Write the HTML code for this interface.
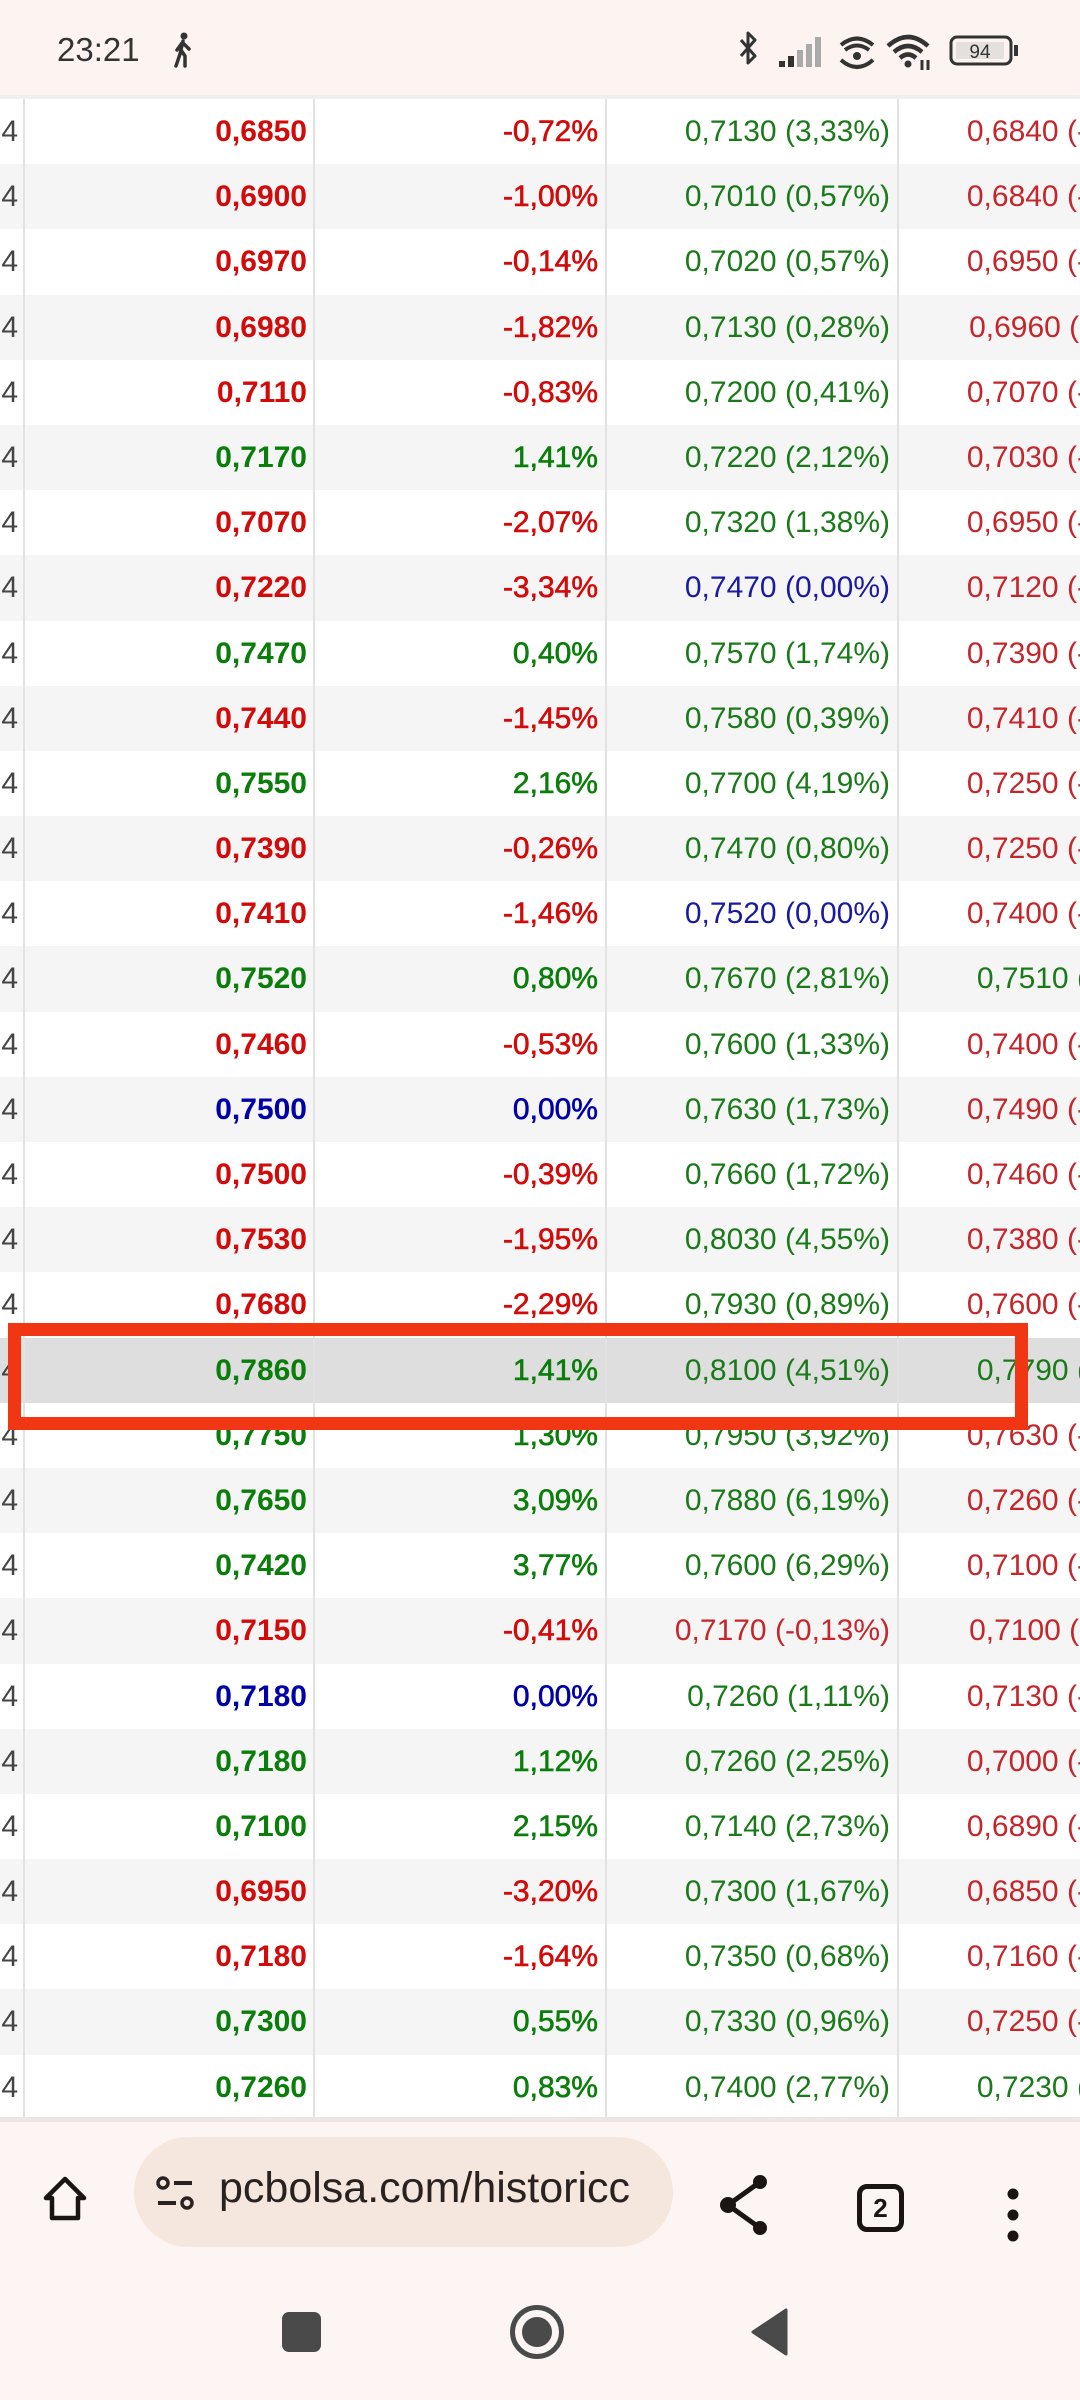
<!DOCTYPE html>
<html><head><meta charset="utf-8">
<style>
*{margin:0;padding:0;box-sizing:border-box}
html,body{width:1080px;height:2400px;overflow:hidden;background:#fdf5f3;font-family:"Liberation Sans",sans-serif}
#sb{position:absolute;left:0;top:0;width:1080px;height:95px;background:#fdf4f2}
#time{position:absolute;left:57px;top:31px;font-size:33px;color:#333}
#tbl{position:absolute;left:0;top:95px;width:1080px;height:2027px;background:#fff;overflow:hidden;border-top:4px solid #f0f0f0}
.r{position:relative;height:65.2px;width:1080px}
.r:nth-child(even){background:#f5f5f5}
.r span{position:absolute;top:0;line-height:65px;font-size:30px;white-space:nowrap;text-align:right}
.a{left:-20px;width:38px;color:#444}
.b{left:23px;width:284px;font-weight:bold}
.c{left:314px;width:284px;-webkit-text-stroke:0.6px currentColor}
.d{left:606px;width:284px}
.e{left:898px;width:284px}
.v{position:absolute;top:0;width:2px;height:2027px;background:#e2e2e2}
.R{color:#d20a0a}.G{color:#0a7d0a}.B{color:#0000a8}
.d.G,.e.G{color:#1a7a1a}.d.R,.e.R{color:#c4262b}.d.B{color:#1a1aa0}
.hl{background:#dedede!important}
#box{position:absolute;left:8px;top:1323px;width:1020px;height:107px;border:13px solid #f03612}
#bb{position:absolute;left:0;top:2122px;width:1080px;height:278px;background:#fdf5f3}
#url{position:absolute;left:134px;top:15px;width:539px;height:110px;border-radius:55px;background:#f5e6de;overflow:hidden}
#url span{position:absolute;left:85px;top:27px;font-size:43px;color:#2a2220;white-space:nowrap}
</style></head><body>
<div id="sb">
<div id="time">23:21</div>
<svg style="position:absolute;left:172px;top:32px" width="22" height="36" viewBox="0 0 22 36"><circle cx="12" cy="4" r="3.5" fill="#333"/><path d="M11 9 L8 22 L4 34 M9 18 L13 24 L13 34 M11 11 L17 17 M10 11 L5 18" stroke="#333" stroke-width="3.5" fill="none" stroke-linecap="round"/></svg>
<svg style="position:absolute;left:735px;top:30px" width="290" height="42" viewBox="0 0 290 42">
<path d="M6 10 L20 26 L13 33 L13 3 L20 10 L6 26" stroke="#333" stroke-width="3" fill="none" stroke-linejoin="round"/>
<rect x="44" y="31" width="6" height="6" fill="#333"/><rect x="53" y="26" width="6" height="11" fill="#333"/><rect x="62" y="20" width="6" height="17" fill="#aaa"/><rect x="71" y="14" width="6" height="23" fill="#aaa"/><rect x="80" y="7" width="6" height="30" fill="#aaa"/>
<path d="M106 15 Q122 2 138 15 M110 20 Q122 11 134 20" stroke="#333" stroke-width="4" fill="none"/><circle cx="122" cy="26" r="4" fill="#333"/><path d="M106 30 Q122 44 138 30" stroke="#333" stroke-width="4" fill="none"/>
<path d="M153 16 Q173 -2 193 16 M159 22 Q173 10 187 22 M165 28 Q173 21 181 28" stroke="#333" stroke-width="4.5" fill="none"/><circle cx="173" cy="34" r="3.5" fill="#333"/><path d="M187 30 v10 M193 30 v10" stroke="#333" stroke-width="3"/>
<rect x="216" y="7" width="60" height="27" rx="6" fill="none" stroke="#333" stroke-width="3"/><rect x="221" y="12" width="48" height="17" fill="#e4e0de"/><rect x="279" y="15" width="4" height="11" fill="#333"/>
<text x="245" y="28" font-size="19" text-anchor="middle" fill="#333" font-family="Liberation Sans">94</text>
</svg>
</div>
<div id="tbl">
<div class="r"><span class="a">4</span><span class="b R">0,6850</span><span class="c R">-0,72%</span><span class="d G">0,7130 (3,33%)</span><span class="e R">0,6840 (-0,15%)</span></div>
<div class="r"><span class="a">4</span><span class="b R">0,6900</span><span class="c R">-1,00%</span><span class="d G">0,7010 (0,57%)</span><span class="e R">0,6840 (-0,15%)</span></div>
<div class="r"><span class="a">4</span><span class="b R">0,6970</span><span class="c R">-0,14%</span><span class="d G">0,7020 (0,57%)</span><span class="e R">0,6950 (-0,43%)</span></div>
<div class="r"><span class="a">4</span><span class="b R">0,6980</span><span class="c R">-1,82%</span><span class="d G">0,7130 (0,28%)</span><span class="e R">0,6960 (-2,11%)</span></div>
<div class="r"><span class="a">4</span><span class="b R">0,7110</span><span class="c R">-0,83%</span><span class="d G">0,7200 (0,41%)</span><span class="e R">0,7070 (-1,39%)</span></div>
<div class="r"><span class="a">4</span><span class="b G">0,7170</span><span class="c G">1,41%</span><span class="d G">0,7220 (2,12%)</span><span class="e R">0,7030 (-0,57%)</span></div>
<div class="r"><span class="a">4</span><span class="b R">0,7070</span><span class="c R">-2,07%</span><span class="d G">0,7320 (1,38%)</span><span class="e R">0,6950 (-3,74%)</span></div>
<div class="r"><span class="a">4</span><span class="b R">0,7220</span><span class="c R">-3,34%</span><span class="d B">0,7470 (0,00%)</span><span class="e R">0,7120 (-4,69%)</span></div>
<div class="r"><span class="a">4</span><span class="b G">0,7470</span><span class="c G">0,40%</span><span class="d G">0,7570 (1,74%)</span><span class="e R">0,7390 (-0,67%)</span></div>
<div class="r"><span class="a">4</span><span class="b R">0,7440</span><span class="c R">-1,45%</span><span class="d G">0,7580 (0,39%)</span><span class="e R">0,7410 (-1,85%)</span></div>
<div class="r"><span class="a">4</span><span class="b G">0,7550</span><span class="c G">2,16%</span><span class="d G">0,7700 (4,19%)</span><span class="e R">0,7250 (-1,89%)</span></div>
<div class="r"><span class="a">4</span><span class="b R">0,7390</span><span class="c R">-0,26%</span><span class="d G">0,7470 (0,80%)</span><span class="e R">0,7250 (-2,16%)</span></div>
<div class="r"><span class="a">4</span><span class="b R">0,7410</span><span class="c R">-1,46%</span><span class="d B">0,7520 (0,00%)</span><span class="e R">0,7400 (-1,60%)</span></div>
<div class="r"><span class="a">4</span><span class="b G">0,7520</span><span class="c G">0,80%</span><span class="d G">0,7670 (2,81%)</span><span class="e G">0,7510 (0,67%)</span></div>
<div class="r"><span class="a">4</span><span class="b R">0,7460</span><span class="c R">-0,53%</span><span class="d G">0,7600 (1,33%)</span><span class="e R">0,7400 (-1,33%)</span></div>
<div class="r"><span class="a">4</span><span class="b B">0,7500</span><span class="c B">0,00%</span><span class="d G">0,7630 (1,73%)</span><span class="e R">0,7490 (-0,13%)</span></div>
<div class="r"><span class="a">4</span><span class="b R">0,7500</span><span class="c R">-0,39%</span><span class="d G">0,7660 (1,72%)</span><span class="e R">0,7460 (-0,93%)</span></div>
<div class="r"><span class="a">4</span><span class="b R">0,7530</span><span class="c R">-1,95%</span><span class="d G">0,8030 (4,55%)</span><span class="e R">0,7380 (-3,91%)</span></div>
<div class="r"><span class="a">4</span><span class="b R">0,7680</span><span class="c R">-2,29%</span><span class="d G">0,7930 (0,89%)</span><span class="e R">0,7600 (-3,31%)</span></div>
<div class="r hl"><span class="a">4</span><span class="b G">0,7860</span><span class="c G">1,41%</span><span class="d G">0,8100 (4,51%)</span><span class="e G">0,7790 (0,51%)</span></div>
<div class="r"><span class="a">4</span><span class="b G">0,7750</span><span class="c G">1,30%</span><span class="d G">0,7950 (3,92%)</span><span class="e R">0,7630 (-0,26%)</span></div>
<div class="r"><span class="a">4</span><span class="b G">0,7650</span><span class="c G">3,09%</span><span class="d G">0,7880 (6,19%)</span><span class="e R">0,7260 (-2,16%)</span></div>
<div class="r"><span class="a">4</span><span class="b G">0,7420</span><span class="c G">3,77%</span><span class="d G">0,7600 (6,29%)</span><span class="e R">0,7100 (-0,70%)</span></div>
<div class="r"><span class="a">4</span><span class="b R">0,7150</span><span class="c R">-0,41%</span><span class="d R">0,7170 (-0,13%)</span><span class="e R">0,7100 (-1,11%)</span></div>
<div class="r"><span class="a">4</span><span class="b B">0,7180</span><span class="c B">0,00%</span><span class="d G">0,7260 (1,11%)</span><span class="e R">0,7130 (-0,70%)</span></div>
<div class="r"><span class="a">4</span><span class="b G">0,7180</span><span class="c G">1,12%</span><span class="d G">0,7260 (2,25%)</span><span class="e R">0,7000 (-1,41%)</span></div>
<div class="r"><span class="a">4</span><span class="b G">0,7100</span><span class="c G">2,15%</span><span class="d G">0,7140 (2,73%)</span><span class="e R">0,6890 (-0,86%)</span></div>
<div class="r"><span class="a">4</span><span class="b R">0,6950</span><span class="c R">-3,20%</span><span class="d G">0,7300 (1,67%)</span><span class="e R">0,6850 (-4,60%)</span></div>
<div class="r"><span class="a">4</span><span class="b R">0,7180</span><span class="c R">-1,64%</span><span class="d G">0,7350 (0,68%)</span><span class="e R">0,7160 (-1,92%)</span></div>
<div class="r"><span class="a">4</span><span class="b G">0,7300</span><span class="c G">0,55%</span><span class="d G">0,7330 (0,96%)</span><span class="e R">0,7250 (-0,14%)</span></div>
<div class="r"><span class="a">4</span><span class="b G">0,7260</span><span class="c G">0,83%</span><span class="d G">0,7400 (2,77%)</span><span class="e G">0,7230 (0,41%)</span></div>
<div class="v" style="left:23px"></div><div class="v" style="left:313px"></div><div class="v" style="left:605px"></div><div class="v" style="left:897px"></div>
</div>
<div style="position:absolute;left:0;top:2117px;width:1080px;height:5px;background:#ece6e4"></div>
<div id="box"></div>
<div id="bb">
<svg style="position:absolute;left:40px;top:52px" width="50" height="50" viewBox="0 0 50 50"><path d="M25 5 L44 24 L38 24 L38 44 L12 44 L12 24 L6 24 Z" fill="none" stroke="#1a1412" stroke-width="4.5" stroke-linejoin="round"/></svg>
<div id="url"><svg style="position:absolute;left:20px;top:38px" width="44" height="40" viewBox="0 0 44 40"><circle cx="9" cy="8" r="5" fill="none" stroke="#2a2220" stroke-width="3.5"/><path d="M20 8 h18 M4 28 h18" stroke="#2a2220" stroke-width="4"/><circle cx="33" cy="28" r="5" fill="none" stroke="#2a2220" stroke-width="3.5"/></svg><span>pcbolsa.com/historicc</span></div>
<svg style="position:absolute;left:716px;top:52px" width="58" height="62" viewBox="0 0 58 62"><path d="M44 8 L12 31 L44 54" fill="none" stroke="#1a1412" stroke-width="5"/><circle cx="44" cy="8" r="7" fill="#1a1412"/><circle cx="12" cy="31" r="8" fill="#1a1412"/><circle cx="44" cy="54" r="7" fill="#1a1412"/></svg>
<div style="position:absolute;left:857px;top:62px;width:47px;height:48px;border:5px solid #1a1412;border-radius:10px;font-size:26px;font-weight:bold;text-align:center;line-height:38px;color:#1a1412">2</div>
<svg style="position:absolute;left:1003px;top:66px" width="20" height="54" viewBox="0 0 20 54"><circle cx="10" cy="6" r="5.5" fill="#1a1412"/><circle cx="10" cy="27" r="5.5" fill="#1a1412"/><circle cx="10" cy="48" r="5.5" fill="#1a1412"/></svg>
<div style="position:absolute;left:282px;top:190px;width:39px;height:40px;border-radius:7px;background:#4a4a4a"></div>
<div style="position:absolute;left:510px;top:183px;width:54px;height:54px;border-radius:50%;border:5px solid #4a4a4a"></div>
<div style="position:absolute;left:522px;top:195px;width:30px;height:30px;border-radius:50%;background:#4a4a4a"></div>
<svg style="position:absolute;left:750px;top:186px" width="40" height="48" viewBox="0 0 40 48"><path d="M36 2 L36 46 L3 24 Z" fill="#4a4a4a" stroke="#4a4a4a" stroke-width="3" stroke-linejoin="round"/></svg>
</div>
</body></html>
